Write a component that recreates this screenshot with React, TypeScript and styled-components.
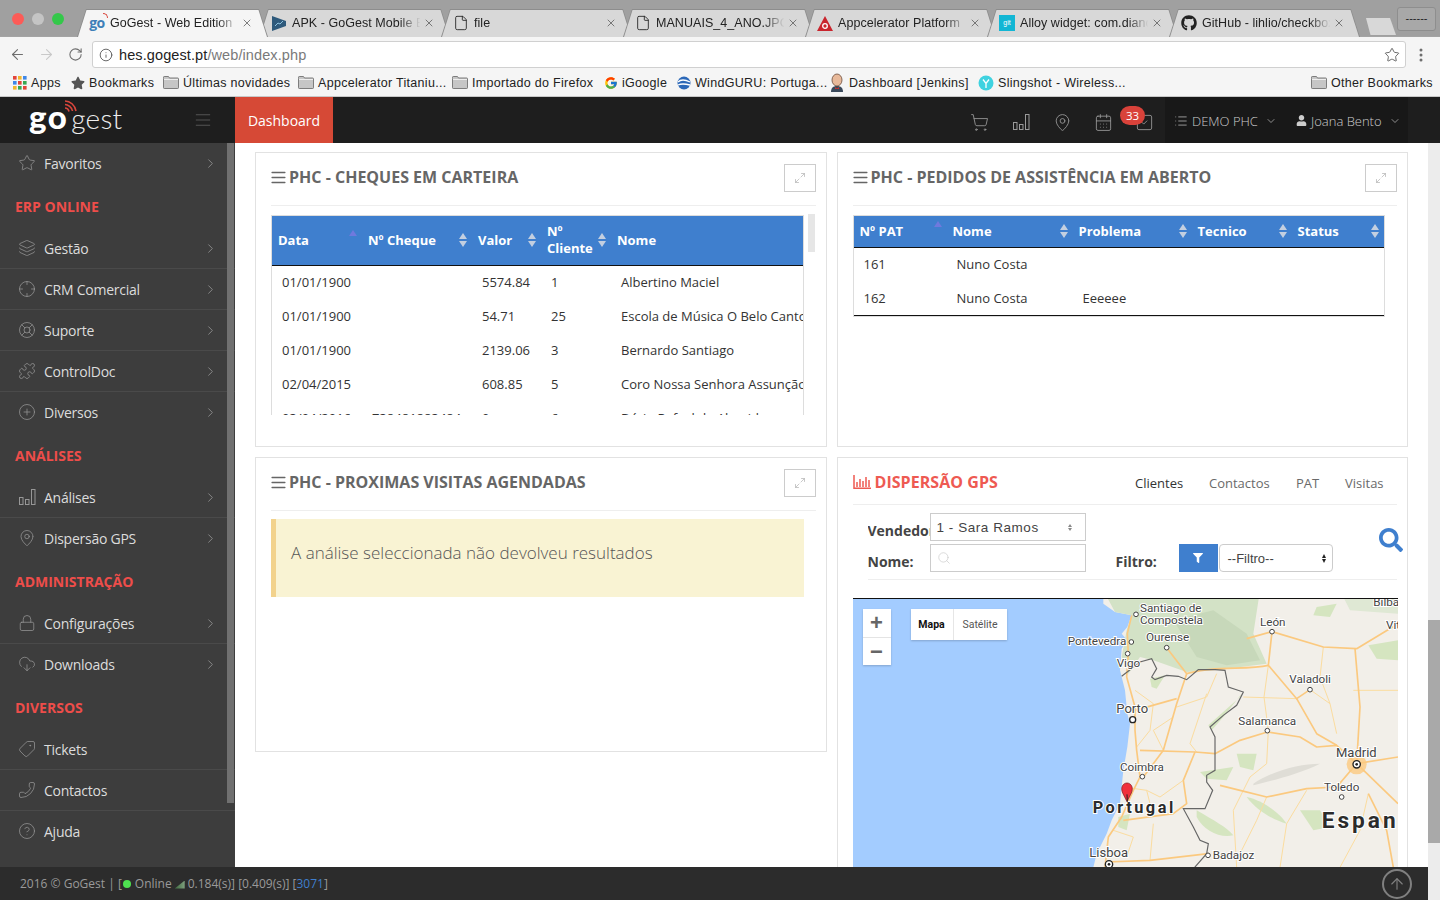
import React from "react";
import styled, { createGlobalStyle } from "styled-components";
import {
  AlignJustify,
  ArrowLeft,
  ArrowRight,
  ArrowUp,
  CalendarDays,
  ChevronDown,
  ChevronRight,
  CircleHelp,
  CirclePlus,
  CloudDownload,
  Crosshair,
  File,
  Info,
  Layers,
  List,
  LifeBuoy,
  Lock,
  MapPin,
  Maximize2,
  Phone,
  Puzzle,
  RotateCw,
  Search,
  ShoppingCart,
  SquareCheck,
  Star,
  Tag,
  X,
} from "lucide-react";
import { FaFilter, FaGithub, FaSearch, FaStar, FaUser } from "react-icons/fa";
import { FcGoogle } from "react-icons/fc";

const GlobalStyle = createGlobalStyle`
  html, body {
    margin: 0;
    height: 100%;
    overflow: hidden;
    background: #fff;
    font-family: "Open Sans", "Liberation Sans", sans-serif;
  }
  #root { height: 100%; }
  * { box-sizing: border-box; }
`;

const Bars = ({ size = 18 }: { size?: number }) => (
  <svg width={size} height={size} viewBox="0 0 18 18" fill="none" stroke="currentColor" strokeWidth="1">
    <rect x="1.5" y="9.5" width="3.5" height="7" />
    <rect x="7.5" y="11.5" width="3.5" height="5" />
    <rect x="13.5" y="1.5" width="3.5" height="15" />
  </svg>
);

const Waves = () => (
  <svg width="14" height="12" viewBox="0 0 14 12" fill="none" stroke="#d9463c" strokeWidth="1.6">
    <path d="M1 1c5 0 10 4 11 10" />
    <path d="M1 4.5c3 0 7 3 7.5 6.5" />
    <path d="M1 8c1.500 0 3.500 1.500 4 3.500" />
  </svg>
);

const Folder = () => (
  <svg width="16" height="13" viewBox="0 0 16 13">
    <path d="M.5 2.500V1.200c0-.4.300-.7.700-.7h4.300l1 1.500h8.300c.4 0 .7.300.7.700v9.100c0 .4-.3.700-.7.700H1.200c-.4 0-.7-.3-.7-.7z" fill="#c6c6c6" stroke="#7d7d7d" />
    <path d="M1 3.500h14" stroke="#eee" />
  </svg>
);

const AppsGrid = () => {
  const colours = ["#e3453a", "#f2b62c", "#3f88e8", "#3f88e8", "#e3453a", "#37a852", "#f2b62c", "#37a852", "#e3453a"];
  return (
    <svg width="14" height="14" viewBox="0 0 14 14">
      {colours.map((c, i) => (
        <rect key={i} x={(i % 3) * 5} y={Math.floor(i / 3) * 5} width="3.600" height="3.600" fill={c} />
      ))}
    </svg>
  );
};

const WindIcon = () => (
  <svg width="14" height="14" viewBox="0 0 14 14">
    <circle cx="7" cy="7" r="6.500" fill="#2c68b8" />
    <path d="M1 6c3-3 8-2 12 0M1 9c4-2 8-1 12 0" stroke="#fff" strokeWidth="1.300" fill="none" />
  </svg>
);

const JenkinsIcon = () => (
  <svg width="16" height="19" viewBox="0 0 16 19">
    <path d="M2 19c0-4 2-6 6-6s6 2 6 6z" fill="#3b4a5c" />
    <ellipse cx="8" cy="7" rx="5" ry="6" fill="#e8b99a" stroke="#6b4a38" strokeWidth=".8" />
    <path d="M6 14l2 1.500 2-1.500v2H6z" fill="#c8312c" />
  </svg>
);

const SlingshotIcon = () => (
  <svg width="16" height="16" viewBox="0 0 16 16">
    <circle cx="8" cy="8" r="7.500" fill="#3fd2e0" />
    <path d="M5 4.500l3 4 3-4M8 8.500V13" stroke="#fff" strokeWidth="1.300" fill="none" />
  </svg>
);

const ApkIcon = () => (
  <svg width="16" height="17" viewBox="0 0 16 17">
    <path d="M1 1l14 5v5L1 16z" fill="#2e5a7c" />
    <path d="M4 11l3-3 2 1 3-3" stroke="#8fc3e0" fill="none" />
  </svg>
);

const AppcIcon = () => (
  <svg width="16" height="15" viewBox="0 0 16 15">
    <path d="M8 0l8 15H0z" fill="#c9252d" />
    <circle cx="8" cy="10" r="2.300" fill="none" stroke="#fff" strokeWidth="1.300" />
  </svg>
);

const Shell = styled.div`
  height: 900px;
  display: flex;
  flex-direction: column;
  overflow: hidden;
`;

/* browser chrome */
const TabStrip = styled.div`
  height: 37px;
  flex: none;
  background: #a0a0a0;
  border-bottom: 1px solid #a4a4a4;
  display: flex;
  align-items: flex-start;
  padding-top: 9px;
  position: relative;
`;

const Lights = styled.div`
  width: 77px;
  flex: none;
  display: flex;
  gap: 8px;
  padding: 4px 0 0 12px;
`;

const Light = styled.span<{ $c: string }>`
  width: 12px;
  height: 12px;
  border-radius: 50%;
  background: ${(p) => p.$c};
`;

const TabShape = styled.div<{ $active?: boolean }>`
  width: 191px;
  height: 28px;
  flex: none;
  margin-right: -9px;
  position: relative;
  z-index: ${(p) => (p.$active ? 2 : 1)};
  clip-path: polygon(0 100%, 9px 0, 182px 0, 100% 100%);
  background: #8d8d8d;
  &::before {
    content: "";
    position: absolute;
    inset: 1px 1px 0 1px;
    clip-path: polygon(0 100%, 8.500px 0, 180.500px 0, 100% 100%);
    background: ${(p) => (p.$active ? "#f5f5f5" : "#d8d8d8")};
  }
`;

const TabInner = styled.div`
  position: relative;
  height: 100%;
  display: flex;
  align-items: center;
  font-family: "Liberation Sans", sans-serif;
  font-size: 12.5px;
  letter-spacing: 0.05px;
  color: #222;
`;

const TabIcon = styled.span`
  width: 33px;
  flex: none;
  display: flex;
  justify-content: center;
  padding-left: 7px;
  color: #222;
`;

const TabTitle = styled.span`
  width: 131px;
  flex: none;
  white-space: nowrap;
  overflow: hidden;
  -webkit-mask-image: linear-gradient(90deg, #000 82%, transparent 98%);
  mask-image: linear-gradient(90deg, #000 82%, transparent 98%);
`;

const TabClose = styled.span`
  display: flex;
  color: #555;
`;

const GoFavicon = styled.span`
  font: 700 14px/1 "Open Sans", sans-serif;
  color: #3f7fb8;
  position: relative;
  letter-spacing: -0.5px;
  margin-top: -1px;
  & > i {
    position: absolute;
    right: -3px;
    top: -3px;
    width: 5px;
    height: 5px;
    border-top: 1.500px solid #d9463c;
    border-right: 1.500px solid #d9463c;
    border-radius: 0 5px 0 0;
  }
`;

const GitFavicon = styled.span`
  width: 16px;
  height: 16px;
  background: #12b6d4;
  color: #fff;
  font: 7px/16px "Liberation Sans", sans-serif;
  text-align: center;
  letter-spacing: 0;
`;

const NewTab = styled.div`
  width: 30px;
  height: 17px;
  margin: 9px 0 0 15px;
  background: #d8d8d8;
  clip-path: polygon(0 0, 80% 0, 100% 100%, 15% 100%);
  flex: none;
`;

const ProfileButton = styled.div`
  position: absolute;
  right: 4px;
  top: 7px;
  width: 39px;
  height: 24px;
  border-radius: 3px;
  background: #a8a8a8;
  border: 1px solid #8e8e8e;
  color: #222;
  font: 11px/20px "Liberation Sans", sans-serif;
  text-align: center;
`;

const Toolbar = styled.div`
  height: 34px;
  flex: none;
  background: #f5f5f5;
  display: flex;
  align-items: center;
  padding: 1px 8px 0 0;
`;

const NavButton = styled.span<{ $faded?: boolean }>`
  width: 29px;
  display: flex;
  justify-content: center;
  color: ${(p) => (p.$faded ? "#c9c9c9" : "#6e6e6e")};
  &:first-child {
    margin-left: 3px;
  }
`;

const MenuDots = styled(NavButton)`
  width: 22px;
`;

const Omnibox = styled.div`
  flex: 1;
  height: 27px;
  margin: 0 4px 0 2px;
  background: #fff;
  border: 1px solid #d0d0d0;
  border-radius: 3px;
  display: flex;
  align-items: center;
  padding: 0 5px 0 6px;
  font-family: "Liberation Sans", sans-serif;
  font-size: 14.5px;
  letter-spacing: 0.1px;
  color: #222;
  gap: 6px;
`;

const UrlRest = styled.span`
  color: #7a7a7a;
`;

const OmniStar = styled.span`
  margin-left: auto;
  display: flex;
  color: #555;
`;

const Bookmarks = styled.div`
  height: 26px;
  flex: none;
  background: #f5f5f5;
  border-bottom: 1px solid #c8c8c8;
  display: flex;
  align-items: center;
  padding: 0 8px 2px 13px;
  font-family: "Liberation Sans", sans-serif;
  font-size: 12.5px;
  letter-spacing: 0.3px;
  color: #222;
  white-space: nowrap;
`;

const Mark = styled.span<{ $w: number; $right?: boolean }>`
  width: ${(p) => p.$w}px;
  flex: none;
  display: flex;
  align-items: center;
  gap: 4px;
  margin-left: ${(p) => (p.$right ? "auto" : "0")};
  & > svg {
    flex: none;
  }
`;

/* application header */
const AppHeader = styled.header`
  height: 46px;
  flex: none;
  background: #1e1e1e;
  display: flex;
  align-items: stretch;
`;

const Brand = styled.div`
  width: 235px;
  flex: none;
  display: flex;
  align-items: center;
  justify-content: space-between;
  padding: 0 23px 0 29px;
  color: #666;
`;

const LogoText = styled.span`
  font-family: Lato, "Open Sans", sans-serif;
  font-size: 28px;
  font-weight: 300;
  color: #eee;
  line-height: 1;
  position: relative;
  letter-spacing: 0.2px;
  margin-top: -8px;
  & > b {
    font-size: 33px;
    font-weight: 900;
    color: #fff;
    letter-spacing: 1.5px;
    margin-right: 3px;
  }
  & > i {
    position: absolute;
    display: flex;
    left: 35px;
    top: 0;
  }
`;

const DashButton = styled.div`
  width: 98px;
  background: #d64936;
  color: #fff;
  font-size: 14px;
  display: flex;
  align-items: center;
  justify-content: center;
`;

const HeaderIcons = styled.div`
  margin-left: auto;
  display: flex;
  align-items: center;
  color: #9a9a9a;
  padding-right: 11px;
`;

const HeaderIcon = styled.span<{ $gap?: number }>`
  display: flex;
  position: relative;
  margin-left: ${(p) => p.$gap ?? 0}px;
  padding-top: 4px;
`;

const Badge = styled.span`
  position: absolute;
  left: -15px;
  top: -3px;
  width: 25px;
  height: 19px;
  border-radius: 10px;
  background: #d9423a;
  color: #fff;
  font-size: 11.500px;
  line-height: 19px;
  text-align: center;
`;

const TenantPanel = styled.div`
  width: 243px;
  margin-right: 32px;
  flex: none;
  background: #181818;
  display: flex;
  align-items: center;
  padding: 1px 0 0 9px;
  color: #ccc;
  font-size: 13px;
  font-weight: 300;
  white-space: nowrap;
`;

const PanelItem = styled.span<{ $w: number }>`
  width: ${(p) => p.$w}px;
  flex: none;
  display: flex;
  align-items: center;
  gap: 4px;
`;

const PanelCaret = styled(ChevronDown)`
  margin-left: 3px;
`;

/* body */
const Body = styled.div`
  flex: 1;
  min-height: 0;
  display: flex;
`;

const Column = styled.div`
  flex: 1;
  min-width: 0;
  display: flex;
  flex-direction: column;
`;

const Panes = styled.div`
  flex: 1;
  min-height: 0;
  display: flex;
`;

const PageScroll = styled.div`
  width: 12px;
  flex: none;
  background: #ececec;
`;

const PageThumb = styled.div`
  height: 223px;
  margin-top: 477px;
  background: #a9a9a9;
`;

const Sidebar = styled.nav`
  width: 235px;
  flex: none;
  background: #3d3d3d;
  position: relative;
  overflow: hidden;
`;

const SideThumb = styled.div`
  position: absolute;
  right: 1px;
  top: 0;
  width: 7px;
  height: 660px;
  background: #707070;
`;

const SideItem = styled.div<{ $line?: boolean }>`
  height: 41px;
  display: flex;
  align-items: center;
  padding: 0 17px 0 18px;
  color: #dcdcdc;
  font-size: 14px;
  border-bottom: 1px solid ${(p) => (p.$line ? "#4a4a4a" : "transparent")};
  & > svg:first-child {
    color: #979797;
    flex: none;
  }
`;

const SideLabel = styled.span`
  margin-left: 8px;
  flex: 1;
  letter-spacing: -0.25px;
`;

const SideChevron = styled.span`
  display: flex;
  color: #8a8a8a;
`;

const SideSection = styled.div`
  height: 44px;
  display: flex;
  align-items: center;
  padding: 1px 0 0 15px;
  color: #ee4d4a;
  font-size: 14px;
  font-weight: 700;
`;

const MirroredTag = styled(Tag)`
  transform: scaleX(-1);
`;

const MirroredPhone = styled(Phone)`
  transform: scaleX(-1);
`;

const Main = styled.main`
  flex: 1;
  min-width: 0;
  overflow: hidden;
  padding: 9px 20px 0;
  display: grid;
  grid-template-columns: 1fr 1fr;
  column-gap: 10px;
  align-items: start;
`;

const MainCol = styled.div`
  display: flex;
  flex-direction: column;
  gap: 10px;
  min-width: 0;
`;

const Card = styled.section<{ $h: number }>`
  height: ${(p) => p.$h}px;
  border: 1px solid #e2e2e2;
  padding: 0 10px 0 15px;
  background: #fff;
`;

const CardTitleRow = styled.div<{ $h?: number }>`
  height: ${(p) => p.$h ?? 53}px;
  border-bottom: 1px solid #eee;
  display: flex;
  align-items: center;
  justify-content: space-between;
  margin-bottom: 9px;
`;

const CardTitle = styled.h3`
  margin: -4px 0 0;
  display: flex;
  align-items: center;
  gap: 2px;
  font-size: 16px;
  font-weight: 700;
  color: #666;
`;

const TitleLines = styled(AlignJustify)`
  margin-left: -1px;
`;

const ExpandButton = styled.span`
  width: 32px;
  height: 28px;
  border: 1px solid #ccc;
  display: flex;
  align-items: center;
  justify-content: center;
  color: #b5b5b5;
  margin-top: -3px;
`;

const TableScroll = styled.div`
  display: flex;
  gap: 4px;
  height: 200px;
`;

const TableClip = styled.div<{ $w: number }>`
  width: ${(p) => p.$w}px;
  flex: none;
  overflow: hidden;
  border: 1px solid #ddd;
  border-bottom: 0;
`;

const TableClipClosed = styled(TableClip)`
  border-bottom: 1px solid #ddd;
  height: fit-content;
`;

const TableThumb = styled.div`
  width: 7px;
  height: 38px;
  background: #e6e6e6;
  margin-top: -1px;
`;

const DataTable = styled.table<{ $w: number }>`
  width: ${(p) => p.$w}px;
  table-layout: fixed;
  border-collapse: collapse;
  font-size: 13px;
  color: #333;
`;

const Th = styled.th<{ $h: number; $w: number }>`
  width: ${(p) => p.$w}px;
  height: ${(p) => p.$h}px;
  background: #3f7fce;
  color: #fff;
  font-size: 13px;
  font-weight: 700;
  text-align: left;
  padding: 0 5px 0 6px;
  border-bottom: 1px solid #111;
  line-height: 17px;
`;

const ThInner = styled.div`
  display: flex;
  align-items: center;
  justify-content: space-between;
`;

const SortMark = styled.span<{ $sorted?: boolean }>`
  display: flex;
  flex-direction: column;
  gap: 2px;
  flex: none;
  margin-top: ${(p) => (p.$sorted ? "-6px" : "0")};
  &::before,
  &::after {
    content: "";
    width: 0;
    height: 0;
    border-left: 4.500px solid transparent;
    border-right: 4.500px solid transparent;
  }
  &::before {
    border-bottom: 6px solid ${(p) => (p.$sorted ? "#6f79dd" : "#c3cfe0")};
  }
  &::after {
    border-top: 6px solid ${(p) => (p.$sorted ? "transparent" : "#c3cfe0")};
  }
`;

const Td = styled.td`
  height: 34px;
  padding: 0 10px;
  white-space: nowrap;
  overflow: hidden;
`;

const ClosedRow = styled.tr`
  &:last-child > td {
    border-bottom: 1px solid #111;
  }
`;

const EmptyAlert = styled.div`
  width: 533px;
  height: 78px;
  margin-top: -1px;
  background: #f9f3d3;
  border-left: 5px solid #f2d28c;
  padding: 0 15px 12px;
  display: flex;
  align-items: center;
  font-size: 17px;
  font-weight: 300;
  color: #555;
`;

const GpsTitle = styled(CardTitle)`
  color: #ee5a52;
  gap: 4px;
  margin-top: 1px;
  letter-spacing: 0.05px;
`;

const GpsTabs = styled.div`
  display: flex;
  margin-right: 13px;
  margin-top: 4px;
  font-size: 13px;
  color: #6a6a6a;
`;

const GpsTab = styled.span<{ $active?: boolean; $w: number }>`
  width: ${(p) => p.$w}px;
  color: ${(p) => (p.$active ? "#333" : "#6a6a6a")};
`;

const FilterGrid = styled.div`
  display: grid;
  grid-template-columns: 62px 156px 30px 63px 39px 1px 114px 47px 24px;
  grid-template-rows: 28px 28px;
  row-gap: 3px;
  margin: -1px 0 0 15px;
  width: 529px;
  height: 67px;
  border-bottom: 1px solid #eee;
  font-size: 14px;
  font-weight: 700;
  color: #444;
`;

const FilterLabel = styled.span<{ $col?: number }>`
  grid-column: ${(p) => p.$col ?? 1};
  align-self: center;
  padding-top: 7px;
  white-space: nowrap;
  overflow: hidden;
`;

const FieldBox = styled.div`
  grid-column: 2;
  border: 1px solid #ccc;
  display: flex;
  align-items: center;
  justify-content: space-between;
  padding: 0 13px 0 6px;
  font-family: "Liberation Sans", sans-serif;
  font-size: 13.500px;
  font-weight: 400;
  letter-spacing: 0.55px;
  color: #444;
`;

const SearchBox = styled(FieldBox)`
  color: #ccc;
`;

const TinySort = styled.span`
  display: flex;
  flex-direction: column;
  gap: 1px;
  &::before,
  &::after {
    content: "";
    border-left: 2.500px solid transparent;
    border-right: 2.500px solid transparent;
  }
  &::before {
    border-bottom: 3px solid #888;
  }
  &::after {
    border-top: 3px solid #888;
  }
`;

const FilterButton = styled.span`
  grid-column: 5;
  background: #3f7fce;
  color: #fff;
  display: flex;
  align-items: center;
  justify-content: center;
`;

const FilterSelect = styled.div`
  grid-column: 7;
  border: 1px solid #ccc;
  border-radius: 4px;
  display: flex;
  align-items: center;
  justify-content: space-between;
  padding: 0 6px 0 8px;
  font-family: "Liberation Sans", sans-serif;
  font-size: 13px;
  font-weight: 400;
  color: #444;
`;

const BlackSort = styled(TinySort)`
  &::before {
    border-bottom: 4px solid #222;
  }
  &::after {
    border-top: 4px solid #222;
  }
`;

const SearchSlot = styled.span`
  grid-column: 9;
  grid-row: 1 / 3;
  color: #3f7fce;
  display: flex;
  align-items: center;
  margin: -6px 0 0 -1px;
`;

const MapBox = styled.div`
  width: 545px;
  height: 300px;
  margin-top: 18px;
  border-top: 1px solid #111;
  background: #a3ccff;
  position: relative;
  overflow: hidden;
`;

const MapArt = styled.svg`
  display: block;
  font-family: Roboto, "Liberation Sans", sans-serif;
`;

const CityText = styled.text<{ $size?: number }>`
  font-size: ${(p) => p.$size ?? 35}px;
  fill: #444;
  stroke: #fff;
  stroke-width: 6px;
  paint-order: stroke;
`;

const CountryText = styled.text<{ $size: number; $gap: number }>`
  font-size: ${(p) => p.$size}px;
  font-weight: 700;
  letter-spacing: ${(p) => p.$gap}px;
  fill: #2b2b2b;
  stroke: #fff;
  stroke-width: 6px;
  paint-order: stroke;
`;

const ZoomControl = styled.div`
  position: absolute;
  left: 10px;
  top: 10px;
  width: 28px;
  height: 56px;
  background: #fff;
  box-shadow: 0 1px 2px rgba(0, 0, 0, 0.2);
  display: flex;
  flex-direction: column;
  color: #666;
  font: 700 22px/28px "Liberation Sans", sans-serif;
  text-align: center;
`;

const ZoomStep = styled.span`
  height: 28px;
  & + & {
    border-top: 1px solid #e4e4e4;
  }
`;

const MapType = styled.div`
  position: absolute;
  left: 58px;
  top: 10px;
  height: 31px;
  width: 96px;
  background: #fff;
  box-shadow: 0 1px 2px rgba(0, 0, 0, 0.2);
  display: flex;
  font: 10.500px/31px Roboto, sans-serif;
  color: #555;
  text-align: center;
`;

const MapTypeItem = styled.span<{ $active?: boolean; $w: number }>`
  width: ${(p) => p.$w}px;
  font-weight: ${(p) => (p.$active ? 700 : 400)};
  color: ${(p) => (p.$active ? "#111" : "#555")};
  border-right: ${(p) => (p.$active ? "1px solid #e6e6e6" : "0")};
`;

const Footer = styled.footer`
  height: 33px;
  flex: none;
  background: #2c2c2c;
  display: flex;
  align-items: center;
  padding: 0 16px 0 20px;
  color: #9a9a9a;
  font-size: 12px;
  white-space: pre;
`;

const OnlineDot = styled.span`
  width: 8px;
  height: 8px;
  border-radius: 50%;
  background: #4fe04f;
  margin: 1px 4px 0 1px;
`;

const SignalMark = styled.span`
  width: 10px;
  height: 8px;
  margin: 2px 3px 0 3px;
  background: linear-gradient(90deg, #3f6a3f, #7fa07f);
  clip-path: polygon(0 100%, 100% 0, 100% 100%);
`;

const BlueCount = styled.span`
  color: #3f7fce;
`;

const TopButton = styled.span`
  margin-left: auto;
  width: 30px;
  height: 30px;
  border: 2px solid #808080;
  border-radius: 50%;
  color: #808080;
  display: flex;
  align-items: center;
  justify-content: center;
`;

type NavEntry = { section: string } | { label: string; icon: React.ReactNode; line?: boolean; noArrow?: boolean };

const ic = { size: 18, strokeWidth: 1 };

const navEntries: NavEntry[] = [
  { label: "Favoritos", icon: <Star {...ic} /> },
  { section: "ERP ONLINE" },
  { label: "Gestão", icon: <Layers {...ic} />, line: true },
  { label: "CRM Comercial", icon: <Crosshair {...ic} />, line: true },
  { label: "Suporte", icon: <LifeBuoy {...ic} />, line: true },
  { label: "ControlDoc", icon: <Puzzle {...ic} />, line: true },
  { label: "Diversos", icon: <CirclePlus {...ic} /> },
  { section: "ANÁLISES" },
  { label: "Análises", icon: <Bars />, line: true },
  { label: "Dispersão GPS", icon: <MapPin {...ic} /> },
  { section: "ADMINISTRAÇÃO" },
  { label: "Configurações", icon: <Lock {...ic} />, line: true },
  { label: "Downloads", icon: <CloudDownload {...ic} /> },
  { section: "DIVERSOS" },
  { label: "Tickets", icon: <MirroredTag {...ic} />, line: true, noArrow: true },
  { label: "Contactos", icon: <MirroredPhone {...ic} />, line: true, noArrow: true },
  { label: "Ajuda", icon: <CircleHelp {...ic} />, noArrow: true },
];

const tabs: { title: string; icon: React.ReactNode; active?: boolean }[] = [
  { title: "GoGest - Web Edition", active: true, icon: <GoFavicon>go<i /></GoFavicon> },
  { title: "APK - GoGest Mobile Edition", icon: <ApkIcon /> },
  { title: "file", icon: <File size={16} strokeWidth={1.3} /> },
  { title: "MANUAIS_4_ANO.JPG", icon: <File size={16} strokeWidth={1.3} /> },
  { title: "Appcelerator Platform", icon: <AppcIcon /> },
  { title: "Alloy widget: com.dianoia", icon: <GitFavicon>git</GitFavicon> },
  { title: "GitHub - lihlio/checkbox", icon: <FaGithub size={16} /> },
];

const chequeCols = [
  { label: "Data", w: 90, sorted: true },
  { label: "Nº Cheque", w: 110 },
  { label: "Valor", w: 69 },
  { label: <>Nº<br />Cliente</>, w: 70 },
  { label: "Nome", w: 260, noSort: true },
];

const chequeRows = [
  ["01/01/1900", "", "5574.84", "1", "Albertino Maciel"],
  ["01/01/1900", "", "54.71", "25", "Escola de Música O Belo Canto"],
  ["01/01/1900", "", "2139.06", "3", "Bernardo Santiago"],
  ["02/04/2015", "", "608.85", "5", "Coro Nossa Senhora Assunção"],
  ["03/04/2016", "738481883484", "0", "6", "Dário Rafael de Almeida"],
];

const patCols = [
  { label: "Nº PAT", w: 93, sorted: true },
  { label: "Nome", w: 126 },
  { label: "Problema", w: 119 },
  { label: "Tecnico", w: 100 },
  { label: "Status", w: 92 },
];

const patRows = [
  ["161", "Nuno Costa", "", "", ""],
  ["162", "Nuno Costa", "Eeeeee", "", ""],
];

const cities: { t: string; x: number; y: number; size?: number }[] = [
  { t: "Santiago de", x: 300, y: 65 },
  { t: "Compostela", x: 300, y: 100 },
  { t: "León", x: 660, y: 107 },
  { t: "Pontevedra", x: 83, y: 165 },
  { t: "Ourense", x: 318, y: 153 },
  { t: "Vigo", x: 230, y: 230 },
  { t: "Valadoli", x: 748, y: 279 },
  { t: "Porto", x: 229, y: 367, size: 39 },
  { t: "Salamanca", x: 595, y: 403 },
  { t: "Coimbra", x: 240, y: 541 },
  { t: "Madrid", x: 888, y: 499, size: 39 },
  { t: "Toledo", x: 852, y: 602 },
  { t: "Lisboa", x: 148, y: 799, size: 39 },
  { t: "Badajoz", x: 518, y: 806 },
  { t: "Bilba", x: 1000, y: 47 },
  { t: "Vit", x: 1038, y: 115 },
];

const towns: [number, number][] = [
  [288, 72], [696, 124], [274, 155], [380, 172], [263, 190], [810, 298],
  [682, 421], [307, 559], [905, 620], [504, 795],
];

const mainRoads = [
  "M275 75L262 130L265 190L260 260L285 350L285 420L290 480L300 560L280 600L245 680L205 740L195 830",
  "M380 172L440 250L410 340L370 480L310 560",
  "M440 250C520 225 620 240 685 225",
  "M620 145L696 124L850 170L950 175L1074 100",
  "M696 124L685 225L770 325L810 298",
  "M285 360L410 325",
  "M300 480L465 485L525 490L600 450L682 425L780 440L830 470L890 465L950 520",
  "M950 520L1074 640",
  "M950 520L890 590L800 595L680 620L600 600L540 585",
  "M950 520L960 350L945 175",
  "M770 325L830 430L890 465",
  "M465 485L430 570L440 640L400 670L250 690",
  "M200 815L330 810L505 790",
  "M950 520L1074 500",
  "M985 610L1040 720L1060 831",
];

const minorRoads = [
  "M500 310L450 460L470 485",
  "M530 250L500 320L410 350",
  "M685 225L672 320L685 420L680 520L630 560L580 660L590 831",
  "M810 298L870 340L890 430",
  "M680 620L650 690L600 790",
  "M770 325L610 320",
  "M850 170L840 260L870 340",
  "M1074 300L940 300",
  "M800 600L740 700L720 831",
  "M900 831L960 720L985 610",
  "M330 810L340 700",
  "M285 300L340 340L330 420L290 470",
  "M400 380L340 420L370 480",
  "M250 590L320 600L340 680",
  "M430 570L360 620L320 600",
  "M220 720L280 740L260 800",
];

const greens = [
  "M470 660C520 690 560 710 580 735C540 745 490 720 470 680Z",
  "M620 620C670 630 720 670 740 700C700 690 650 660 620 620Z",
  "M780 660L840 660L870 710L820 720Z",
  "M590 490L650 490L640 540L600 530Z",
  "M480 545L580 530L560 570L500 565Z",
  "M505 405L600 320L605 310L550 380L515 420Z",
  "M235 680L270 670L260 720L235 710Z",
  "M330 265L375 255L350 295L335 290Z",
  "M985 165L1074 150L1074 210L1010 205Z",
  "M830 50L890 40L870 80L820 75Z",
];

const SortableHead = ({ cols, h }: { cols: { label: React.ReactNode; w: number; sorted?: boolean; noSort?: boolean }[]; h: number }) => (
  <thead>
    <tr>
      {cols.map((c, i) => (
        <Th key={i} $h={h} $w={c.w}>
          <ThInner>
            <span>{c.label}</span>
            {!c.noSort && <SortMark $sorted={c.sorted} />}
          </ThInner>
        </Th>
      ))}
    </tr>
  </thead>
);

const TitleRow = ({ title }: { title: string }) => (
  <CardTitleRow>
    <CardTitle>
      <TitleLines size={17} strokeWidth={2} />
      {title}
    </CardTitle>
    <ExpandButton>
      <Maximize2 size={12} strokeWidth={1.500} />
    </ExpandButton>
  </CardTitleRow>
);

export default function App() {
  return (
    <Shell>
      <GlobalStyle />
      <TabStrip>
        <Lights>
          <Light $c="#fc5b57" />
          <Light $c="#c4c4c4" />
          <Light $c="#34c84a" />
        </Lights>
        {tabs.map((t) => (
          <TabShape key={t.title} $active={t.active}>
            <TabInner>
              <TabIcon>{t.icon}</TabIcon>
              <TabTitle>{t.title}</TabTitle>
              <TabClose>
                <X size={12} strokeWidth={1.500} />
              </TabClose>
            </TabInner>
          </TabShape>
        ))}
        <NewTab />
        <ProfileButton>------</ProfileButton>
      </TabStrip>
      <Toolbar>
        <NavButton><ArrowLeft size={17} strokeWidth={1.500} /></NavButton>
        <NavButton $faded><ArrowRight size={17} strokeWidth={1.500} /></NavButton>
        <NavButton><RotateCw size={15} strokeWidth={1.700} /></NavButton>
        <Omnibox>
          <Info size={14} strokeWidth={1.500} color="#555" />
          <span>hes.gogest.pt<UrlRest>/web/index.php</UrlRest></span>
          <OmniStar><Star size={16} strokeWidth={1.300} /></OmniStar>
        </Omnibox>
        <MenuDots>
          <svg width="4" height="14" viewBox="0 0 4 14" fill="#6e6e6e">
            <circle cx="2" cy="2" r="1.500" />
            <circle cx="2" cy="7" r="1.500" />
            <circle cx="2" cy="12" r="1.500" />
          </svg>
        </MenuDots>
      </Toolbar>
      <Bookmarks>
        <Mark $w={58}><AppsGrid /> Apps</Mark>
        <Mark $w={92}><FaStar size={14} color="#555" /> Bookmarks</Mark>
        <Mark $w={135}><Folder /> Últimas novidades</Mark>
        <Mark $w={154}><Folder /> Appcelerator Titaniu...</Mark>
        <Mark $w={152}><Folder /> Importado do Firefox</Mark>
        <Mark $w={73}><FcGoogle size={14} /> iGoogle</Mark>
        <Mark $w={152}><WindIcon /> WindGURU: Portuga...</Mark>
        <Mark $w={149}><JenkinsIcon /> Dashboard [Jenkins]</Mark>
        <Mark $w={160}><SlingshotIcon /> Slingshot - Wireless...</Mark>
        <Mark $w={121} $right><Folder /> Other Bookmarks</Mark>
      </Bookmarks>
      <AppHeader>
        <Brand>
          <LogoText>
            <b>go</b>gest
            <i><Waves /></i>
          </LogoText>
          <AlignJustify size={18} strokeWidth={1} />
        </Brand>
        <DashButton>Dashboard</DashButton>
        <HeaderIcons>
          <HeaderIcon><ShoppingCart size={19} strokeWidth={1.100} /></HeaderIcon>
          <HeaderIcon $gap={23}><Bars /></HeaderIcon>
          <HeaderIcon $gap={23}><MapPin size={19} strokeWidth={1.100} /></HeaderIcon>
          <HeaderIcon $gap={22}><CalendarDays size={19} strokeWidth={1.100} /></HeaderIcon>
          <HeaderIcon $gap={22}>
            <SquareCheck size={19} strokeWidth={1.100} />
            <Badge>33</Badge>
          </HeaderIcon>
        </HeaderIcons>
        <TenantPanel>
          <PanelItem $w={122}>
            <List size={14} strokeWidth={1.200} />
            DEMO PHC
            <PanelCaret size={12} strokeWidth={1.300} />
          </PanelItem>
          <PanelItem $w={110}>
            <FaUser size={11} />
            Joana Bento
            <PanelCaret size={12} strokeWidth={1.300} />
          </PanelItem>
        </TenantPanel>
      </AppHeader>
      <Body>
        <Column>
          <Panes>
            <Sidebar>
              {navEntries.map((e) =>
                "section" in e ? (
                  <SideSection key={e.section}>{e.section}</SideSection>
                ) : (
                  <SideItem key={e.label} $line={e.line}>
                    {e.icon}
                    <SideLabel>{e.label}</SideLabel>
                    {!e.noArrow && (
                      <SideChevron><ChevronRight size={15} strokeWidth={1.500} /></SideChevron>
                    )}
                  </SideItem>
                ),
              )}
              <SideThumb />
            </Sidebar>
            <Main>
              <MainCol>
                <Card $h={295}>
                  <TitleRow title="PHC - CHEQUES EM CARTEIRA" />
                  <TableScroll>
                    <TableClip $w={533}>
                      <DataTable $w={599}>
                        <SortableHead cols={chequeCols} h={49} />
                        <tbody>
                          {chequeRows.map((r, i) => (
                            <tr key={i}>
                              {r.map((v, j) => <Td key={j}>{v}</Td>)}
                            </tr>
                          ))}
                        </tbody>
                      </DataTable>
                    </TableClip>
                    <TableThumb />
                  </TableScroll>
                </Card>
                <Card $h={295}>
                  <TitleRow title="PHC - PROXIMAS VISITAS AGENDADAS" />
                  <EmptyAlert>A análise seleccionada não devolveu resultados</EmptyAlert>
                </Card>
              </MainCol>
              <MainCol>
                <Card $h={295}>
                  <TitleRow title="PHC - PEDIDOS DE ASSISTÊNCIA EM ABERTO" />
                  <TableClipClosed $w={532}>
                    <DataTable $w={530}>
                      <SortableHead cols={patCols} h={31} />
                      <tbody>
                        {patRows.map((r, i) => (
                          <ClosedRow key={i}>
                            {r.map((v, j) => <Td key={j}>{v}</Td>)}
                          </ClosedRow>
                        ))}
                      </tbody>
                    </DataTable>
                  </TableClipClosed>
                </Card>
                <Card $h={560}>
                  <CardTitleRow $h={47}>
                    <GpsTitle>
                      <svg width="18" height="14" viewBox="0 0 18 14" fill="none" stroke="#ee5a52" strokeWidth="1.500">
                        <path d="M1 0v13.300h17" />
                        <path d="M4 12V7M7 12V4M10 12V6M13 12V2M16 12V5" />
                      </svg>
                      DISPERSÃO GPS
                    </GpsTitle>
                    <GpsTabs>
                      <GpsTab $active $w={74}>Clientes</GpsTab>
                      <GpsTab $w={87}>Contactos</GpsTab>
                      <GpsTab $w={49}>PAT</GpsTab>
                      <GpsTab $w={39}>Visitas</GpsTab>
                    </GpsTabs>
                  </CardTitleRow>
                  <FilterGrid>
                    <FilterLabel>Vendedor</FilterLabel>
                    <FieldBox>1 - Sara Ramos<TinySort /></FieldBox>
                    <SearchSlot><FaSearch size={24} /></SearchSlot>
                    <FilterLabel>Nome:</FilterLabel>
                    <SearchBox><Search size={14} strokeWidth={1.200} /></SearchBox>
                    <FilterLabel $col={4}>Filtro:</FilterLabel>
                    <FilterButton><FaFilter size={10} /></FilterButton>
                    <FilterSelect>--Filtro--<BlackSort /></FilterSelect>
                  </FilterGrid>
                  <MapBox>
                    <MapArt width="545" height="300" viewBox="-561 26 1635 900">
                      <path
                        d="M190 0L190 40L225 65L275 75L262 110L245 130L262 150L245 175L240 240L255 300L262 370L270 400L262 470L250 540L245 590L240 640L215 690L200 730L170 790L160 831L150 927L1074 927L1074 0Z"
                        fill="#f2efe9"
                      />
                      <path
                        d="M190 0L660 0L640 130L680 220L560 235L440 245L340 210L300 200L265 250L245 200L260 120L275 75L225 65Z"
                        fill="#d3e2c6"
                      />
                      <path d="M400 90L520 60L620 130L660 210L560 225L470 200Z" fill="#c7d8ba" />
                      <path d="M1074 0L900 0L930 60L1074 70Z" fill="#dfe8d4" />
                      <path d="M640 580C700 540 780 520 840 520C780 550 700 570 640 585Z" fill="#dfddd6" />
                      {greens.map((d) => <path key={d} d={d} fill="#d5e5c0" />)}
                      {minorRoads.map((d) => <path key={d} d={d} fill="none" stroke="#fbdc9f" strokeWidth="3" />)}
                      {mainRoads.map((d) => <path key={d} d={d} fill="none" stroke="#fbc97f" strokeWidth="5" strokeLinejoin="round" />)}
                      <path
                        d="M245 258L300 215L335 205L350 235L335 260L345 268L380 255L415 258L440 268L475 238L525 238L555 240L565 290L610 305L590 345L550 375L510 410L525 440L525 540L500 555L500 575L518 600L495 655L430 655L460 710L480 750L505 760L500 790L465 830L460 927"
                        fill="none"
                        stroke="#666"
                        strokeWidth="3.500"
                      />
                      <circle cx="950" cy="522" r="30" fill="#fbc97f" opacity=".8" />
                      {cities.map((c) => (
                        <CityText key={c.t} x={c.x} y={c.y} $size={c.size}>{c.t}</CityText>
                      ))}
                      {towns.map(([x, y]) => (
                        <circle key={`${x}-${y}`} cx={x} cy={y} r="7" fill="#fff" stroke="#444" strokeWidth="3" />
                      ))}
                      <circle cx="278" cy="388" r="9" fill="#fff" stroke="#222" strokeWidth="4" />
                      <circle cx="950" cy="522" r="11" fill="#fff" stroke="#222" strokeWidth="4" />
                      <circle cx="950" cy="522" r="4" fill="#222" />
                      <circle cx="207" cy="822" r="11" fill="#fff" stroke="#222" strokeWidth="4" />
                      <circle cx="207" cy="822" r="4" fill="#222" />
                      <CountryText x={158} y={668} $size={49} $gap={7.500}>Portugal</CountryText>
                      <CountryText x={845} y={712} $size={68} $gap={9}>Espan</CountryText>
                      <path d="M261 634L248 608C240 590 250 578 261 578C272 578 282 590 274 608Z" fill="#f0303c" stroke="#7a1218" strokeWidth="2" />
                      <path d="M261 612L262 634" stroke="#222" strokeWidth="3" />
                    </MapArt>
                    <ZoomControl>
                      <ZoomStep>+</ZoomStep>
                      <ZoomStep>−</ZoomStep>
                    </ZoomControl>
                    <MapType>
                      <MapTypeItem $active $w={43}>Mapa</MapTypeItem>
                      <MapTypeItem $w={53}>Satélite</MapTypeItem>
                    </MapType>
                  </MapBox>
                </Card>
              </MainCol>
            </Main>
          </Panes>
          <Footer>
            2016 © GoGest | [<OnlineDot />Online<SignalMark />0.184(s)] [0.409(s)] [<BlueCount>3071</BlueCount>]
            <TopButton><ArrowUp size={18} strokeWidth={1.500} /></TopButton>
          </Footer>
        </Column>
        <PageScroll><PageThumb /></PageScroll>
      </Body>
    </Shell>
  );
}
